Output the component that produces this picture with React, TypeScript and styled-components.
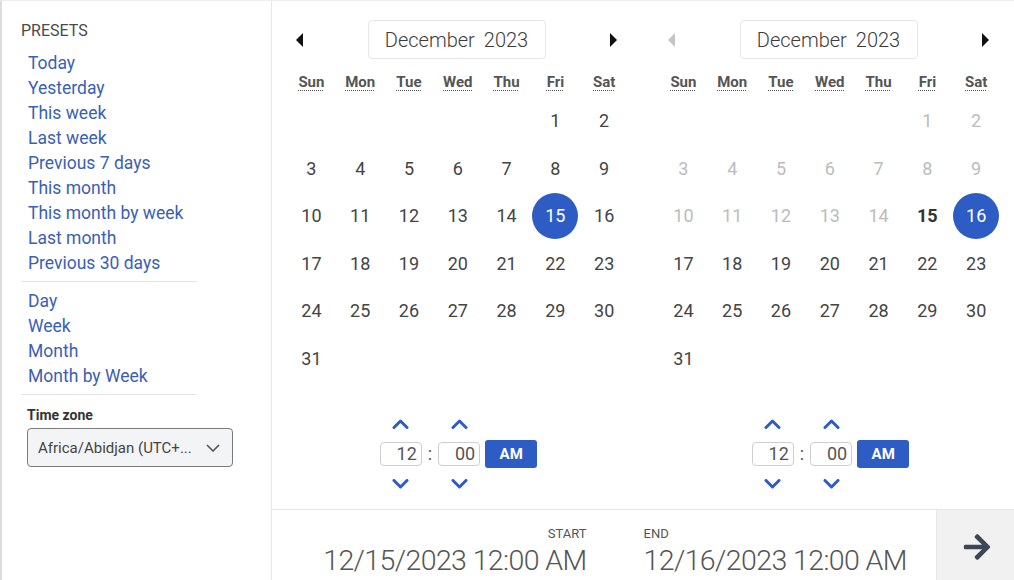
import React from 'react'
import styled, { createGlobalStyle } from 'styled-components'
import { FaArrowRight } from 'react-icons/fa'

const GlobalStyle = createGlobalStyle`
  html, body {
    margin: 0;
    padding: 0;
    background: #fff;
    overflow: hidden;
  }
  * {
    box-sizing: border-box;
  }
`

const BLUE = '#2d5cc4'

const Frame = styled.div`
  display: flex;
  width: 1014px;
  height: 580px;
  border-top: 1px solid #ececec;
  font-family: Roboto, 'Liberation Sans', sans-serif;
  color: #444;
`

const Sidebar = styled.div`
  width: 272px;
  flex-shrink: 0;
  border-left: 2px solid #dcdcdc;
  border-right: 1px solid #e6e6e6;
  padding: 20px 0 0 19px;
  display: flex;
  flex-direction: column;
`

const PresetTitle = styled.div`
  font-size: 16px;
  line-height: 20px;
  color: #4a4a4a;
  text-transform: uppercase;
  margin-bottom: 10px;
`

const LinkList = styled.div`
  display: flex;
  flex-direction: column;
  padding-left: 7px;
`

const PresetLink = styled.a`
  font-size: 17.5px;
  line-height: 25px;
  color: #3a60b6;
  text-decoration: none;
  cursor: pointer;
`

const Divider = styled.div`
  width: 176px;
  height: 1px;
  background: #e4e4e4;
  margin: 5px 0 7px;
`

const ZoneLabel = styled.div`
  font-size: 14px;
  font-weight: 700;
  color: #333;
  padding-left: 6px;
  margin-top: 4px;
  line-height: 18px;
`

const ZoneSelect = styled.div`
  margin: 4px 0 0 6px;
  width: 206px;
  height: 39px;
  border: 1px solid #7a7a7a;
  border-radius: 4px;
  background: #f3f4f6;
  display: flex;
  align-items: center;
  justify-content: space-between;
  padding: 0 12px 0 10px;
  font-size: 15px;
  color: #444;
`

const Main = styled.div`
  flex: 1;
  display: flex;
  flex-direction: column;
`

const Calendars = styled.div`
  flex: 1;
  display: flex;
  gap: 30px;
  padding: 19px 0 0 15px;
`

const Calendar = styled.div`
  width: 342px;
  display: flex;
  flex-direction: column;
`

const CalHeader = styled.div`
  height: 39px;
  display: flex;
  align-items: center;
  justify-content: space-between;
  padding: 0 10px 0 7px;
`

const NavArrow = styled.span<{ $dir: 'left' | 'right'; $disabled?: boolean }>`
  width: 0;
  height: 0;
  border-top: 7px solid transparent;
  border-bottom: 7px solid transparent;
  ${p =>
    p.$dir === 'left'
      ? `border-right: 7px solid ${p.$disabled ? '#c4c4c4' : '#111'};`
      : `border-left: 7px solid ${p.$disabled ? '#c4c4c4' : '#111'};`}
  margin: 0 2px;
`

const MonthBox = styled.div`
  width: 178px;
  height: 39px;
  border: 1px solid #e6e6e6;
  border-radius: 4px;
  display: flex;
  align-items: center;
  justify-content: center;
  gap: 9px;
  font-size: 20px;
  font-weight: 300;
  color: #3c3c3c;
`

const Grid = styled.div`
  display: grid;
  grid-template-columns: repeat(7, 48.8px);
  grid-auto-rows: 47.5px;
`

const DayNames = styled.div`
  display: grid;
  grid-template-columns: repeat(7, 48.8px);
  height: 30px;
  margin-top: 8px;
  align-items: center;
`

const DayName = styled.abbr`
  text-align: center;
  font-size: 15px;
  font-weight: 700;
  color: #555;
  text-decoration: underline dotted;
  text-underline-offset: 3px;
  text-decoration-thickness: 1px;
  cursor: help;
`

const Day = styled.div<{ $muted?: boolean; $bold?: boolean; $selected?: boolean }>`
  display: flex;
  align-items: center;
  justify-content: center;
  font-size: 18px;
  color: ${p => (p.$selected ? '#fff' : p.$muted ? '#bcbcbc' : p.$bold ? '#333' : '#444')};
  font-weight: ${p => (p.$bold ? 700 : 400)};
  span {
    width: 46px;
    height: 46px;
    border-radius: 50%;
    display: flex;
    align-items: center;
    justify-content: center;
    background: ${p => (p.$selected ? BLUE : 'transparent')};
  }
`

const TimeBlock = styled.div`
  margin-top: 29px;
  display: flex;
  justify-content: center;
  align-items: center;
  padding-left: 1px;
`

const Spinner = styled.div`
  display: flex;
  flex-direction: column;
  align-items: center;
`

const Chevron = styled.button`
  border: none;
  background: transparent;
  padding: 0;
  height: 26px;
  width: 30px;
  display: flex;
  align-items: center;
  justify-content: center;
  cursor: pointer;
`

const TimeInput = styled.div`
  width: 42px;
  height: 24px;
  border: 1px solid #cfcfcf;
  border-radius: 4px;
  margin: 5px 0;
  font-size: 18px;
  color: #555;
  text-align: right;
  padding-right: 4px;
  line-height: 22px;
`

const Colon = styled.span`
  font-size: 18px;
  color: #555;
  margin: 0 6px;
  line-height: 22px;
`

const AmButton = styled.button`
  margin-left: 5px;
  width: 52px;
  height: 28px;
  border: none;
  border-radius: 3px;
  background: ${BLUE};
  color: #fff;
  font-family: Roboto, 'Liberation Sans', sans-serif;
  font-weight: 700;
  font-size: 15px;
  cursor: pointer;
`

const Footer = styled.div`
  height: 71px;
  border-top: 1px solid #e8e8e8;
  display: flex;
`

const Summary = styled.div`
  flex: 1;
  display: flex;
  justify-content: center;
  gap: 57px;
  padding: 16px 0 0 22px;
`

const Stamp = styled.div<{ $align: 'left' | 'right' }>`
  display: flex;
  flex-direction: column;
  align-items: ${p => (p.$align === 'right' ? 'flex-end' : 'flex-start')};
`

const StampLabel = styled.div`
  font-size: 13px;
  line-height: 16px;
  color: #555;
  text-transform: uppercase;
`

const StampValue = styled.div`
  font-size: 28.5px;
  font-weight: 300;
  color: #555;
  line-height: 32px;
  margin-top: 3px;
  letter-spacing: -0.6px;
`

const Apply = styled.button`
  width: 78px;
  border: none;
  border-left: 1px solid #e8e8e8;
  background: #f1f1f1;
  color: #3c4657;
  display: flex;
  align-items: center;
  justify-content: center;
  padding: 4px 0 0 2px;
  cursor: pointer;
`

const ChevronIcon = ({ up }: { up?: boolean }) => (
  <svg width="17" height="10" viewBox="0 0 17 10">
    <path
      d={up ? 'M2 8.5 L8.5 2 L15 8.5' : 'M2 1.5 L8.5 8 L15 1.5'}
      fill="none"
      stroke={BLUE}
      strokeWidth="3"
      strokeLinecap="round"
      strokeLinejoin="round"
    />
  </svg>
)

const SelectChevron = () => (
  <svg width="14" height="8" viewBox="0 0 14 8">
    <path d="M1 1 L7 7 L13 1" fill="none" stroke="#555" strokeWidth="1.6" />
  </svg>
)

const dayNames = [
  ['Sun', 'Sunday'],
  ['Mon', 'Monday'],
  ['Tue', 'Tuesday'],
  ['Wed', 'Wednesday'],
  ['Thu', 'Thursday'],
  ['Fri', 'Friday'],
  ['Sat', 'Saturday'],
]

const presets = [
  'Today',
  'Yesterday',
  'This week',
  'Last week',
  'Previous 7 days',
  'This month',
  'This month by week',
  'Last month',
  'Previous 30 days',
]

const periods = ['Day', 'Week', 'Month', 'Month by Week']

interface MonthProps {
  selected: number
  minDay?: number
  prevDisabled?: boolean
}

function MonthView({ selected, minDay = 0, prevDisabled }: MonthProps) {
  // December 2023 starts on a Friday
  const cells: (number | null)[] = [null, null, null, null, null]
  for (let d = 1; d <= 31; d++) cells.push(d)

  return (
    <Calendar>
      <CalHeader>
        <NavArrow $dir="left" $disabled={prevDisabled} />
        <MonthBox>
          <span>December</span>
          <span>2023</span>
        </MonthBox>
        <NavArrow $dir="right" />
      </CalHeader>
      <DayNames>
        {dayNames.map(([s, l]) => (
          <DayName key={s} title={l}>
            {s}
          </DayName>
        ))}
      </DayNames>
      <Grid>
        {cells.map((d, i) =>
          d === null ? (
            <div key={i} />
          ) : (
            <Day
              key={i}
              $selected={d === selected}
              $muted={d < minDay}
              $bold={minDay > 0 && d === minDay}
            >
              <span>{d}</span>
            </Day>
          )
        )}
      </Grid>
      <TimeBlock>
        <Spinner>
          <Chevron>
            <ChevronIcon up />
          </Chevron>
          <TimeInput>12</TimeInput>
          <Chevron>
            <ChevronIcon />
          </Chevron>
        </Spinner>
        <Colon>:</Colon>
        <Spinner>
          <Chevron>
            <ChevronIcon up />
          </Chevron>
          <TimeInput>00</TimeInput>
          <Chevron>
            <ChevronIcon />
          </Chevron>
        </Spinner>
        <AmButton>AM</AmButton>
      </TimeBlock>
    </Calendar>
  )
}

export default function App() {
  return (
    <>
      <GlobalStyle />
      <Frame>
        <Sidebar>
          <PresetTitle>Presets</PresetTitle>
          <LinkList>
            {presets.map(p => (
              <PresetLink key={p}>{p}</PresetLink>
            ))}
          </LinkList>
          <Divider />
          <LinkList>
            {periods.map(p => (
              <PresetLink key={p}>{p}</PresetLink>
            ))}
          </LinkList>
          <Divider />
          <ZoneLabel>Time zone</ZoneLabel>
          <ZoneSelect>
            <span>Africa/Abidjan (UTC+...</span>
            <SelectChevron />
          </ZoneSelect>
        </Sidebar>
        <Main>
          <Calendars>
            <MonthView selected={15} />
            <MonthView selected={16} minDay={15} prevDisabled />
          </Calendars>
          <Footer>
            <Summary>
              <Stamp $align="right">
                <StampLabel>Start</StampLabel>
                <StampValue>12/15/2023 12:00 AM</StampValue>
              </Stamp>
              <Stamp $align="left">
                <StampLabel>End</StampLabel>
                <StampValue>12/16/2023 12:00 AM</StampValue>
              </Stamp>
            </Summary>
            <Apply>
              <FaArrowRight size={30} />
            </Apply>
          </Footer>
        </Main>
      </Frame>
    </>
  )
}
